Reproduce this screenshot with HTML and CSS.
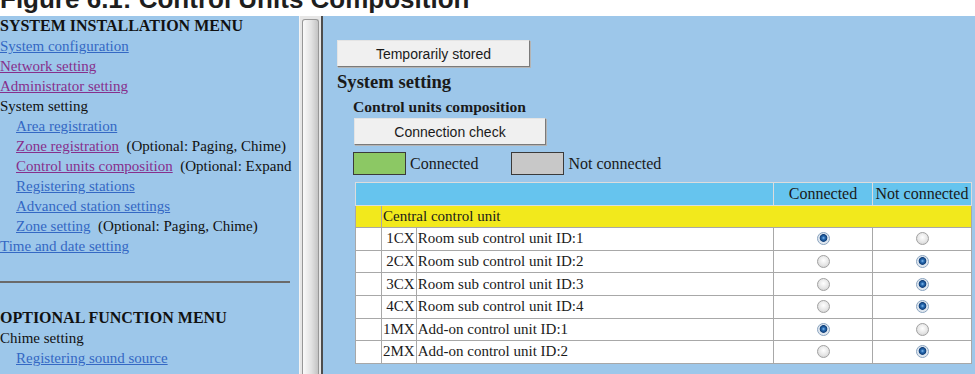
FILE: index.html
```html
<!DOCTYPE html>
<html lang="en">

<head>
    <meta charset="UTF-8">
    <meta name="viewport" content="width=device-width, initial-scale=1.0">
    <title>Control units composition</title>
    <link rel="stylesheet" href="styles.css">
</head>

<body>
    <div class="caption"><span>Figure 6.1: Control Units Composition</span></div>

    <div class="frames">
        <div class="menu-frame">
            <div class="menu">
                <div class="menu-title">SYSTEM INSTALLATION MENU</div>
                <div><a href="#">System configuration</a></div>
                <div><a href="#" class="visited">Network setting</a></div>
                <div><a href="#" class="visited">Administrator setting</a></div>
                <div>System setting</div>
                <div class="sub"><a href="#">Area registration</a></div>
                <div class="sub"><a href="#" class="visited">Zone registration</a>&nbsp; (Optional: Paging, Chime)</div>
                <div class="sub"><a href="#" class="visited">Control units composition</a>&nbsp; (Optional: Expand</div>
                <div class="sub"><a href="#">Registering stations</a></div>
                <div class="sub"><a href="#">Advanced station settings</a></div>
                <div class="sub"><a href="#">Zone setting</a>&nbsp; (Optional: Paging, Chime)</div>
                <div><a href="#">Time and date setting</a></div>

                <div class="rule"></div>

                <div class="menu-title">OPTIONAL FUNCTION MENU</div>
                <div>Chime setting</div>
                <div class="sub"><a href="#">Registering sound source</a></div>
            </div>
            <!-- frame scrollbar -->
            <div class="scrollbar">
                <div class="thumb"></div>
            </div>
        </div>

        <div class="content">
            <button class="btn btn-store">Temporarily stored</button>
            <h2>System setting</h2>

            <div class="section">
                <h3>Control units composition</h3>
                <button class="btn btn-check">Connection check</button>

                <div class="legend">
                    <span class="swatch on"></span>
                    <span class="legend-label">Connected</span>
                    <span class="swatch off"></span>
                    <span class="legend-label">Not connected</span>
                </div>

                <table class="units">
                    <colgroup>
                        <col class="col-pad">
                        <col>
                        <col>
                        <col class="col-state">
                        <col class="col-state">
                    </colgroup>
                    <tr class="head">
                        <td colspan="3"></td>
                        <td class="state">Connected</td>
                        <td class="state">Not connected</td>
                    </tr>
                    <tr class="group">
                        <td></td>
                        <td colspan="4">Central control unit</td>
                    </tr>
                    <tr>
                        <td></td>
                        <td class="code">1CX</td>
                        <td>Room sub control unit ID:1</td>
                        <td class="pick"><input type="radio" name="u1" checked></td>
                        <td class="pick"><input type="radio" name="u1"></td>
                    </tr>
                    <tr>
                        <td></td>
                        <td class="code">2CX</td>
                        <td>Room sub control unit ID:2</td>
                        <td class="pick"><input type="radio" name="u2"></td>
                        <td class="pick"><input type="radio" name="u2" checked></td>
                    </tr>
                    <tr>
                        <td></td>
                        <td class="code">3CX</td>
                        <td>Room sub control unit ID:3</td>
                        <td class="pick"><input type="radio" name="u3"></td>
                        <td class="pick"><input type="radio" name="u3" checked></td>
                    </tr>
                    <tr>
                        <td></td>
                        <td class="code">4CX</td>
                        <td>Room sub control unit ID:4</td>
                        <td class="pick"><input type="radio" name="u4"></td>
                        <td class="pick"><input type="radio" name="u4" checked></td>
                    </tr>
                    <tr>
                        <td></td>
                        <td class="code">1MX</td>
                        <td>Add-on control unit ID:1</td>
                        <td class="pick"><input type="radio" name="m1" checked></td>
                        <td class="pick"><input type="radio" name="m1"></td>
                    </tr>
                    <tr>
                        <td></td>
                        <td class="code">2MX</td>
                        <td>Add-on control unit ID:2</td>
                        <td class="pick"><input type="radio" name="m2"></td>
                        <td class="pick"><input type="radio" name="m2" checked></td>
                    </tr>
                </table>
            </div>
        </div>
    </div>
</body>

</html>
```

FILE: styles.css
```css
html,
body {
    margin: 0;
    padding: 0;
    height: 100%;
    overflow: hidden;
}

body {
    background-color: #fff;
    font-family: "Liberation Serif", "Times New Roman", serif;
    color: #111;
}

/* figure caption, only its lower half is in view */
.caption {
    height: 16px;
    overflow: hidden;
    font-family: "Liberation Sans", Arial, sans-serif;
    font-weight: bold;
    font-size: 26px;
    line-height: 26px;
    color: #1e1e1e;
    white-space: nowrap;
}

.caption span {
    display: block;
    margin-top: -14px;
}

.frames {
    display: flex;
    height: calc(100% - 16px);
    background-color: #9dc7ea;
}

.menu-frame {
    display: flex;
    width: 321px;
    flex-shrink: 0;
    border-right: 2px solid #4d4d4d;
}

.menu {
    width: 300px;
    overflow: hidden;
    white-space: nowrap;
    font-size: 15px;
    line-height: 20px;
}

.menu-title {
    font-weight: bold;
    font-size: 16px;
}

.menu .sub {
    padding-left: 16px;
}

.menu a {
    color: #3468c4;
}

.menu a.visited {
    color: #872f8c;
}

.rule {
    width: 290px;
    margin: 25px 0;
    border-top: 2px solid #6a6a6a;
}

.scrollbar {
    width: 17px;
    padding: 3px 2px 0 2px;
    background-color: #e6e6e6;
    border-left: 1px solid #f4f4f4;
}

.thumb {
    height: 100%;
    border: 1px solid #979797;
    border-bottom: none;
    border-radius: 3px 3px 0 0;
    background: linear-gradient(to right, #fafafa, #e2e2e2 55%, #c3c3c3);
}

.content {
    flex: 1;
    padding: 24px 3px 0 14px;
    color: #1a1a1a;
}

.btn {
    display: block;
    height: 27px;
    padding: 0;
    font-family: "Liberation Sans", Arial, sans-serif;
    font-size: 14px;
    color: #1a1a1a;
    background-color: #f0f0f0;
    border: 1px solid;
    border-color: #e4e4e4 #7a7a7a #7a7a7a #e4e4e4;
    box-shadow: 1px 1px 0 #b4b4b4;
}

.btn-store {
    width: 193px;
}

.btn-check {
    width: 192px;
    margin-top: 2px;
    margin-left: 1px;
}

h2 {
    margin: 4px 0 0;
    font-size: 18.6px;
    line-height: 21px;
}

.section {
    margin-left: 16px;
}

h3 {
    margin: 6px 0 0;
    font-size: 15.6px;
    line-height: 18px;
}

.legend {
    display: flex;
    align-items: center;
    margin-top: 7px;
    font-size: 16px;
}

.swatch {
    width: 51px;
    height: 21px;
    border: 1px solid #3a3a3a;
}

.swatch.on {
    background-color: #8cc864;
}

.swatch.off {
    background-color: #c8c8c8;
    margin-left: 33px;
}

.legend-label {
    margin-left: 4px;
}

.units {
    width: calc(100% - 2px);
    margin: 7px 0 0 2px;
    border-collapse: collapse;
    background-color: #fff;
    border: 1px solid #b8b8b8;
    font-size: 15px;
}

.units td {
    height: 21.6px;
    padding: 0 1px;
    border: 1px solid #a8a8a8;
    white-space: nowrap;
}

.col-pad {
    width: 26px;
}

.col-state {
    width: 99px;
}

.units .head td {
    background-color: #66c4ee;
    border-color: #dcdcdc;
    font-size: 16px;
}

.units .state {
    text-align: center;
}

.units .group td {
    background-color: #f2e91c;
}

.units .code {
    width: 1px;
    text-align: right;
}

.units .pick {
    text-align: center;
}

.pick input {
    appearance: none;
    -webkit-appearance: none;
    display: block;
    width: 13px;
    height: 13px;
    margin: 0 auto;
    border: 1px solid #a2a2a2;
    border-radius: 50%;
    background: radial-gradient(circle at 50% 40%, #ffffff, #e6e6e6 55%, #c9c9c9);
}

.pick input:checked {
    border-color: #8aa4c0;
    background: radial-gradient(circle at 50% 45%, #8cc0ee 0, #2b6fb6 1.5px, #103f7a 3.5px, #dbe4ee 4.2px, #f2f2f2);
}
```
